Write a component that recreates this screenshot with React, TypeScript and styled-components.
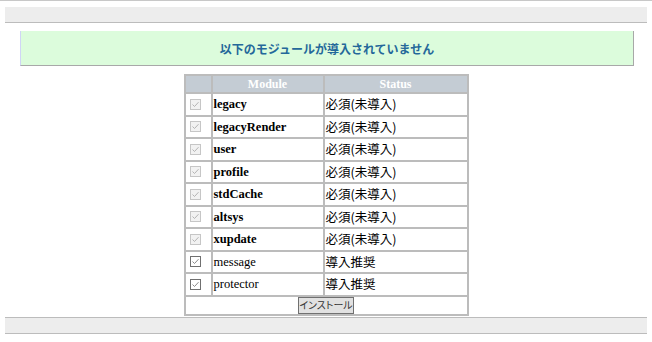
import styled, { createGlobalStyle } from 'styled-components';

// モジュール導入チェック画面

const modules = [
  { name: 'legacy', status: '必須(未導入)', required: true },
  { name: 'legacyRender', status: '必須(未導入)', required: true },
  { name: 'user', status: '必須(未導入)', required: true },
  { name: 'profile', status: '必須(未導入)', required: true },
  { name: 'stdCache', status: '必須(未導入)', required: true },
  { name: 'altsys', status: '必須(未導入)', required: true },
  { name: 'xupdate', status: '必須(未導入)', required: true },
  { name: 'message', status: '導入推奨', required: false },
  { name: 'protector', status: '導入推奨', required: false },
];

const Check = ({ disabled }: { disabled?: boolean }) => (
  <Box $disabled={disabled}>
    <svg width="9" height="9" viewBox="0 0 9 9">
      <polyline
        points="1.5,4.5 3.5,6.5 7.5,2.2"
        fill="none"
        stroke={disabled ? '#b4b4b4' : '#8a8a8a'}
        strokeWidth="1"
      />
    </svg>
  </Box>
);

const App = () => {
  return (
    <Page>
      <GlobalStyle />
      <Band />
      <Notice>以下のモジュールが導入されていません</Notice>
      <Table>
        <thead>
          <tr>
            <Th $width={25} />
            <Th $width={110}>Module</Th>
            <Th $width={142}>Status</Th>
          </tr>
        </thead>
        <tbody>
          {modules.map((m) => (
            <Row key={m.name}>
              <Td>
                <Check disabled={m.required} />
              </Td>
              <NameTd $bold={m.required}>{m.name}</NameTd>
              <StatusTd>{m.status}</StatusTd>
            </Row>
          ))}
          <tr>
            <FootTd colSpan={3}>
              <InstallBtn>インストール</InstallBtn>
            </FootTd>
          </tr>
        </tbody>
      </Table>
      <Band $closed />
    </Page>
  );
};

const GlobalStyle = createGlobalStyle`
  body {
    margin: 0;
    background: #ffffff;
    font-family: "Liberation Serif", serif;
  }
`;
const Page = styled.div`
  width: 652px;
  height: 342px;
  box-sizing: border-box;
  border-top: 1px solid #c8c8c8;
  padding-top: 6px;
`;
const Band = styled.div<{ $closed?: boolean }>`
  margin: ${(p) => (p.$closed ? '1px 5px 0 5px' : '0 5px')};
  height: 15px;
  background: #ededed;
  border-bottom: 1px solid #bcbcbc;
  border-top: ${(p) => (p.$closed ? '1px solid #bcbcbc' : 'none')};
`;
const Notice = styled.div`
  margin: 8px 18px 0 20px;
  height: 34px;
  background: #dcfcdc;
  border-left: 1px solid #d0d4f6;
  border-right: 1px solid #a8a8a8;
  border-bottom: 1px solid #a8a8a8;
  display: flex;
  align-items: center;
  justify-content: center;
  font-family: "Noto Sans CJK JP", sans-serif;
  font-size: 12px;
  font-weight: 700;
  color: #24689a;
`;
const Table = styled.table`
  margin: 8px auto 0 auto;
  border-collapse: separate;
  border-spacing: 2px;
  background: #bcbcbc;
  font-size: 12px;
`;
const Row = styled.tr`
  height: 20.5px;
`;
const Th = styled.th<{ $width: number }>`
  width: ${(p) => p.$width}px;
  height: 16px;
  padding: 0;
  background: #c4ccd4;
  color: #ffffff;
  font-family: "Liberation Serif", serif;
  font-weight: 700;
  font-size: 12px;
  line-height: 16px;
  text-align: center;
`;
const Td = styled.td`
  padding: 0 0 0 4px;
  background: #ffffff;
  vertical-align: middle;
  line-height: 0;
`;
const NameTd = styled.td<{ $bold?: boolean }>`
  padding: 0 0 0 1px;
  background: #ffffff;
  color: #000000;
  font-family: "Liberation Serif", serif;
  font-weight: ${(p) => (p.$bold ? 700 : 400)};
  font-size: 12.5px;
  line-height: 16px;
  vertical-align: middle;
`;
const StatusTd = styled.td`
  padding: 0 0 0 1px;
  background: #ffffff;
  color: #000000;
  font-family: "Noto Sans CJK JP", sans-serif;
  font-size: 12.5px;
  line-height: 16px;
  vertical-align: middle;
`;
const FootTd = styled.td`
  padding: 0;
  background: #ffffff;
  text-align: center;
  line-height: 0;
`;
const Box = styled.span<{ $disabled?: boolean }>`
  display: inline-flex;
  align-items: center;
  justify-content: center;
  width: 11px;
  height: 11px;
  box-sizing: border-box;
  border: 1px solid ${(p) => (p.$disabled ? '#c6c6c6' : '#707070')};
  background: ${(p) => (p.$disabled ? '#f2f2f2' : '#ffffff')};
`;
const InstallBtn = styled.button`
  all: unset;
  box-sizing: border-box;
  display: inline-flex;
  align-items: center;
  justify-content: center;
  width: 56px;
  height: 17px;
  background: #e1e1e1;
  border: 1px solid #707070;
  color: #333333;
  font-family: "Noto Sans CJK JP", sans-serif;
  font-size: 10px;
  font-feature-settings: "palt";
  cursor: pointer;
`;

export default App;
